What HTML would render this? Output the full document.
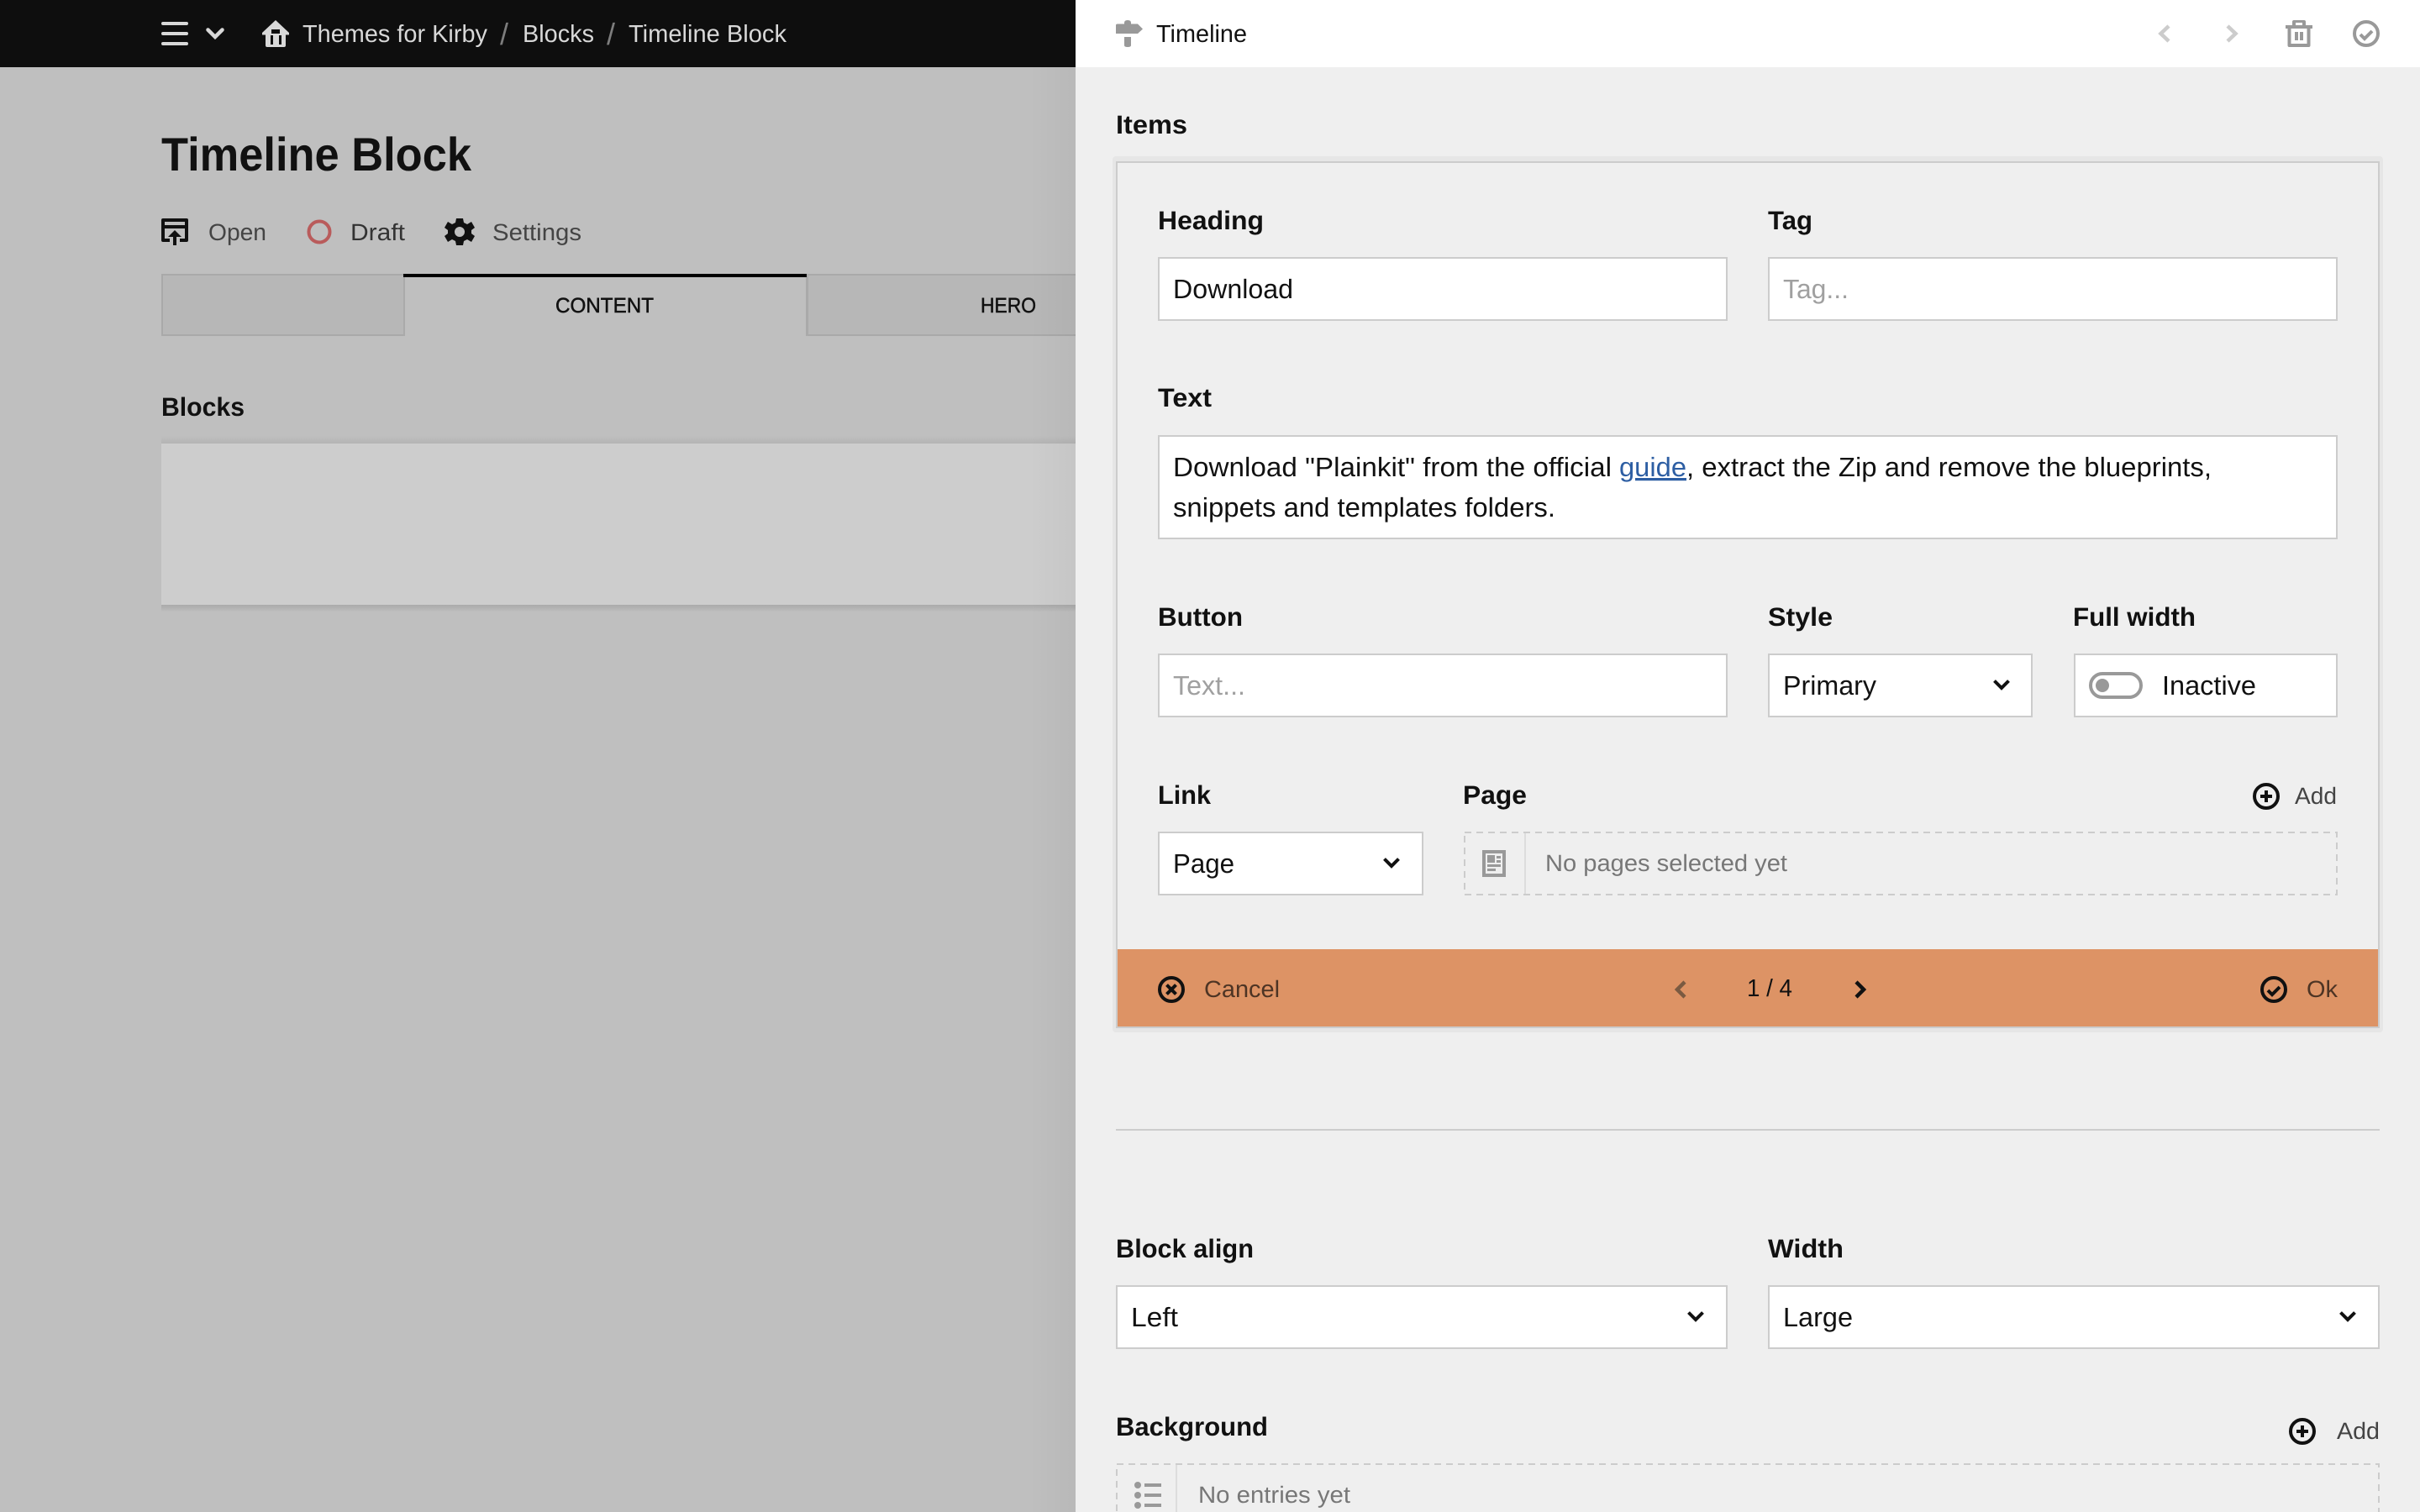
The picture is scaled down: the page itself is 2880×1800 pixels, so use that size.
<!DOCTYPE html>
<html lang="en"><head><meta charset="utf-8"><title>Timeline Block</title>
<style>
html,body{margin:0;padding:0;width:2880px;height:1800px;overflow:hidden;background:#efefef}
svg{display:block}
text{font-family:"Liberation Sans",Arial,sans-serif;text-rendering:geometricPrecision}
.b{font-weight:700;font-size:31px;fill:#111}
.i{font-size:32px;fill:#111}
.s{font-size:28px;fill:#444}
.n{font-size:29px;fill:#d8d8d8}
.p{font-size:32px;fill:#a0a0a0}
.e{font-size:28px;fill:#777}
</style></head><body>
<svg xmlns="http://www.w3.org/2000/svg" width="2880" height="1800" viewBox="0 0 2880 1800">
<defs>
<linearGradient id="sh" x1="0" x2="1" y1="0" y2="0"><stop offset="0" stop-color="#000" stop-opacity="0"/><stop offset="1" stop-color="#000" stop-opacity=".035"/></linearGradient>
<linearGradient id="bs" x1="0" x2="0" y1="0" y2="1"><stop offset="0" stop-color="#aaa"/><stop offset="1" stop-color="#bdbdbd"/></linearGradient>
<linearGradient id="ts" x1="0" x2="0" y1="0" y2="1"><stop offset="0" stop-color="#bfbfbf"/><stop offset="1" stop-color="#b4b4b4"/></linearGradient>
</defs>
<!-- main -->
<rect width="1280" height="1800" fill="#bfbfbf"/>
<rect width="1280" height="80" fill="#0e0e0e"/>
<g stroke="#d8d8d8" stroke-width="4" stroke-linecap="round" fill="none">
<path d="M194 28H222M194 40H222M194 52H222"/>
<path d="M247.500 35.500L256 44L264.500 35.500" stroke-width="4.500"/>
</g>
<path fill="#d8d8d8" fill-rule="evenodd" d="M328 24L344 39V41.500H340V54Q340 56 338 56H318Q316 56 316 54V41.500H312V39ZM323 35V40H333V35ZM322 42V53H325V42ZM332 42V53H335V42Z"/>
<text class="n" x="360" y="50" textLength="220" lengthAdjust="spacingAndGlyphs">Themes for Kirby</text>
<text x="595" y="53" font-size="36" fill="#7d7d7d">/</text>
<text class="n" x="622" y="50" textLength="85" lengthAdjust="spacingAndGlyphs">Blocks</text>
<text x="722" y="53" font-size="36" fill="#7d7d7d">/</text>
<text class="n" x="748" y="50" textLength="188" lengthAdjust="spacingAndGlyphs">Timeline Block</text>

<text x="192" y="203" font-size="56" font-weight="700" fill="#111" textLength="369" lengthAdjust="spacingAndGlyphs">Timeline Block</text>

<path fill="#111" fill-rule="evenodd" d="M194 260H222Q224 260 224 262V286Q224 288 222 288H214V284H220V272H196V284H202V288H194Q192 288 192 286V262Q192 260 194 260ZM196 264V268H220V264Z"/>
<path fill="#111" d="M208 274L216 282H210V292H206V282H200Z"/>
<text class="s" x="248" y="286" textLength="69" lengthAdjust="spacingAndGlyphs">Open</text>
<circle cx="380" cy="276" r="12.500" fill="none" stroke="#b95b5b" stroke-width="4"/>
<text class="s" x="417" y="286" textLength="65" lengthAdjust="spacingAndGlyphs" style="fill:#333">Draft</text>
<path fill="#111" fill-rule="evenodd" d="M542 260H550L551 265L555 267L560 264L564 271L560 274V278L564 281L560 288L555 285L551 287L550 292H542L541 287L537 285L532 288L528 281L532 278V274L528 271L532 264L537 267L541 265ZM546 270A6 6 0 1 0 546 282A6 6 0 1 0 546 270Z" transform="translate(1 0)"/>
<text class="s" x="586" y="286" textLength="106" lengthAdjust="spacingAndGlyphs">Settings</text>

<!-- tabs -->
<rect x="192" y="326" width="289" height="74" fill="#b7b7b7"/>
<path d="M193 327V399H481M192 327H481" fill="none" stroke="#a9a9a9" stroke-width="2"/>
<rect x="960" y="326" width="320" height="74" fill="#b7b7b7"/>
<path d="M961 327V399H1280M960 327H1280" fill="none" stroke="#a9a9a9" stroke-width="2"/>
<path d="M481 326V400M960 326V400" stroke="#aaa" stroke-width="2"/>
<rect x="480" y="326" width="480" height="4" fill="#000"/>
<text x="661" y="372" font-size="25" fill="#111" stroke="#111" stroke-width=".5" textLength="117" lengthAdjust="spacingAndGlyphs">CONTENT</text>
<text x="1167" y="372" font-size="25" fill="#111" stroke="#111" stroke-width=".5" textLength="66" lengthAdjust="spacingAndGlyphs">HERO</text>

<text class="b" x="192" y="495" textLength="99" lengthAdjust="spacingAndGlyphs">Blocks</text>
<rect x="192" y="519" width="1088" height="9" fill="url(#ts)"/>
<rect x="192" y="528" width="1088" height="192" fill="#cdcdcd"/>
<rect x="192" y="720" width="1088" height="8" fill="url(#bs)"/>
<rect x="1225" y="0" width="55" height="1800" fill="url(#sh)"/>

<!-- drawer -->
<rect x="1280" width="1600" height="1800" fill="#efefef"/>
<rect x="1280" width="1600" height="80" fill="#fff"/>
<path fill="#999" d="M1338 27Q1338 24 1342 24Q1346 24 1346 27V28.500H1354L1360 34.500L1354 40H1328V30Q1328 28.500 1330 28.500H1338ZM1338 44H1346V54Q1346 56 1342 56Q1338 56 1338 54Z"/>
<text x="1376" y="50" font-size="29" fill="#111" textLength="108" lengthAdjust="spacingAndGlyphs">Timeline</text>
<g fill="none" stroke-width="4.500">
<path d="M2581 31L2571.500 40L2581 49M2651 31L2660.500 40L2651 49" stroke="#ccc"/>
</g>
<path fill="#999" fill-rule="evenodd" d="M2730 24H2742Q2744 24 2744 26V30H2752V34H2749.500V54Q2749.500 56 2747.500 56H2724.500Q2722.500 56 2722.500 54V34H2720V30H2728V26Q2728 24 2730 24ZM2732 27V30H2740V27ZM2726.500 34V52H2745.500V34ZM2731 38H2735V48H2731ZM2737 38H2741V48H2737Z"/>
<g fill="none" stroke="#999" stroke-width="4"><circle cx="2816" cy="40" r="14"/><path d="M2809 41L2814 46L2823 37"/></g>

<text class="b" x="1328" y="159" textLength="85" lengthAdjust="spacingAndGlyphs">Items</text>

<!-- card -->
<rect x="1324" y="186" width="1512" height="1043" rx="4" fill="#e6e6e6"/>
<rect x="1328" y="192" width="1504" height="1032" fill="#ccc"/>
<rect x="1330" y="194" width="1500" height="1028" fill="#efefef"/>

<g fill="#fff" stroke="#ccc" stroke-width="2">
<rect x="1379" y="307" width="676" height="74"/>
<rect x="2105" y="307" width="676" height="74"/>
<rect x="1379" y="519" width="1402" height="122"/>
<rect x="1379" y="779" width="676" height="74"/>
<rect x="2105" y="779" width="313" height="74"/>
<rect x="2469" y="779" width="312" height="74"/>
<rect x="1379" y="991" width="314" height="74"/>
<rect x="1329" y="1531" width="726" height="74"/>
<rect x="2105" y="1531" width="726" height="74"/>
</g>

<text class="b" x="1378" y="273" textLength="126" lengthAdjust="spacingAndGlyphs">Heading</text>
<text class="b" x="2104" y="273" textLength="53" lengthAdjust="spacingAndGlyphs">Tag</text>
<text class="i" x="1396" y="355" textLength="143" lengthAdjust="spacingAndGlyphs">Download</text>
<text class="p" x="2122" y="355" textLength="78" lengthAdjust="spacingAndGlyphs">Tag...</text>

<text class="b" x="1378" y="484" textLength="64" lengthAdjust="spacingAndGlyphs">Text</text>
<text class="i" x="1396" y="567" textLength="522" lengthAdjust="spacingAndGlyphs">Download "Plainkit" from the official</text>
<text class="i" x="1927" y="567" textLength="80" lengthAdjust="spacingAndGlyphs" style="fill:#2d5ea3" text-decoration="underline">guide</text>
<text class="i" x="2007" y="567" textLength="625" lengthAdjust="spacingAndGlyphs">, extract the Zip and remove the blueprints,</text>
<text class="i" x="1396" y="615" textLength="455" lengthAdjust="spacingAndGlyphs">snippets and templates folders.</text>

<text class="b" x="1378" y="745" textLength="101" lengthAdjust="spacingAndGlyphs">Button</text>
<text class="b" x="2104" y="745" textLength="77" lengthAdjust="spacingAndGlyphs">Style</text>
<text class="b" x="2467" y="745" textLength="146" lengthAdjust="spacingAndGlyphs">Full width</text>
<text class="p" x="1396" y="827" textLength="86" lengthAdjust="spacingAndGlyphs">Text...</text>
<text class="i" x="2122" y="827" textLength="111" lengthAdjust="spacingAndGlyphs">Primary</text>
<path d="M2373.500 810.500L2382 819L2390.500 810.500" fill="none" stroke="#111" stroke-width="4"/>
<rect x="2488" y="802" width="60" height="28" rx="14" fill="none" stroke="#999" stroke-width="4"/>
<circle cx="2502" cy="816" r="8" fill="#999"/>
<text class="i" x="2573" y="827" textLength="112" lengthAdjust="spacingAndGlyphs">Inactive</text>

<text class="b" x="1378" y="957" textLength="63" lengthAdjust="spacingAndGlyphs">Link</text>
<text class="b" x="1741" y="957" textLength="76" lengthAdjust="spacingAndGlyphs">Page</text>
<g fill="none" stroke="#111" stroke-width="4"><circle cx="2697" cy="948" r="14"/><path d="M2690 948H2704M2697 941V955"/></g>
<text class="s" x="2731" y="957" textLength="50" lengthAdjust="spacingAndGlyphs">Add</text>
<text class="i" x="1396" y="1039" textLength="73" lengthAdjust="spacingAndGlyphs">Page</text>
<path d="M1647.500 1022.500L1656 1031L1664.500 1022.500" fill="none" stroke="#111" stroke-width="4"/>

<rect x="1743" y="991" width="1038" height="74" fill="none" stroke="#ccc" stroke-width="2" stroke-dasharray="8 6"/>
<path d="M1815 992V1064" stroke="#ddd" stroke-width="2"/>
<path fill="#999" fill-rule="evenodd" d="M1764 1012H1792V1044H1764ZM1768 1016V1040H1788V1016ZM1770 1018H1779V1027H1770ZM1781 1019H1786V1022H1781ZM1781 1024H1786V1027H1781ZM1770 1029H1786V1032H1770ZM1770 1034H1780V1037H1770Z"/>
<text class="e" x="1839" y="1037" textLength="288" lengthAdjust="spacingAndGlyphs">No pages selected yet</text>

<!-- bar -->
<rect x="1330" y="1130" width="1500" height="92" fill="#dd9365"/>
<g fill="none" stroke="#111" stroke-width="4">
<circle cx="1394" cy="1178" r="14"/><path d="M1388.500 1172.500L1399.500 1183.500M1399.500 1172.500L1388.500 1183.500"/>
<circle cx="2706" cy="1178" r="14"/><path d="M2699 1179L2704 1184L2713 1175"/>
<path d="M2209 1169L2218 1178L2209 1187" stroke-width="4.500"/>
<path d="M2005 1169L1996 1178L2005 1187" stroke-width="4.500" stroke="#7a5a41"/>
</g>
<text x="1433" y="1187" font-size="28" fill="#4d3424" textLength="90" lengthAdjust="spacingAndGlyphs">Cancel</text>
<text x="2079" y="1186" font-size="29" fill="#111" textLength="54" lengthAdjust="spacingAndGlyphs">1 / 4</text>
<text x="2745" y="1187" font-size="28" fill="#4d3424" textLength="37" lengthAdjust="spacingAndGlyphs">Ok</text>

<rect x="1328" y="1344" width="1504" height="2" fill="#ccc"/>

<text class="b" x="1328" y="1497" textLength="164" lengthAdjust="spacingAndGlyphs">Block align</text>
<text class="b" x="2104" y="1497" textLength="90" lengthAdjust="spacingAndGlyphs">Width</text>
<text class="i" x="1346" y="1579" textLength="56" lengthAdjust="spacingAndGlyphs">Left</text>
<text class="i" x="2122" y="1579" textLength="83" lengthAdjust="spacingAndGlyphs">Large</text>
<path d="M2009.500 1562.500L2018 1571L2026.500 1562.500M2785.500 1562.500L2794 1571L2802.500 1562.500" fill="none" stroke="#111" stroke-width="4"/>

<text class="b" x="1328" y="1709" textLength="181" lengthAdjust="spacingAndGlyphs">Background</text>
<g fill="none" stroke="#111" stroke-width="4"><circle cx="2740" cy="1704" r="14"/><path d="M2733 1704H2747M2740 1697V1711"/></g>
<text class="s" x="2781" y="1713" textLength="51" lengthAdjust="spacingAndGlyphs">Add</text>

<rect x="1329" y="1743" width="1502" height="80" fill="none" stroke="#ccc" stroke-width="2" stroke-dasharray="8 6"/>
<path d="M1400 1744V1800" stroke="#ddd" stroke-width="2"/>
<g fill="#999"><circle cx="1354" cy="1768" r="4"/><circle cx="1354" cy="1780" r="4"/><circle cx="1354" cy="1792" r="4"/><rect x="1362" y="1766" width="20" height="4"/><rect x="1362" y="1778" width="20" height="4"/><rect x="1362" y="1790" width="20" height="4"/></g>
<text class="e" x="1426" y="1789" textLength="181" lengthAdjust="spacingAndGlyphs">No entries yet</text>
</svg>
</body></html>
